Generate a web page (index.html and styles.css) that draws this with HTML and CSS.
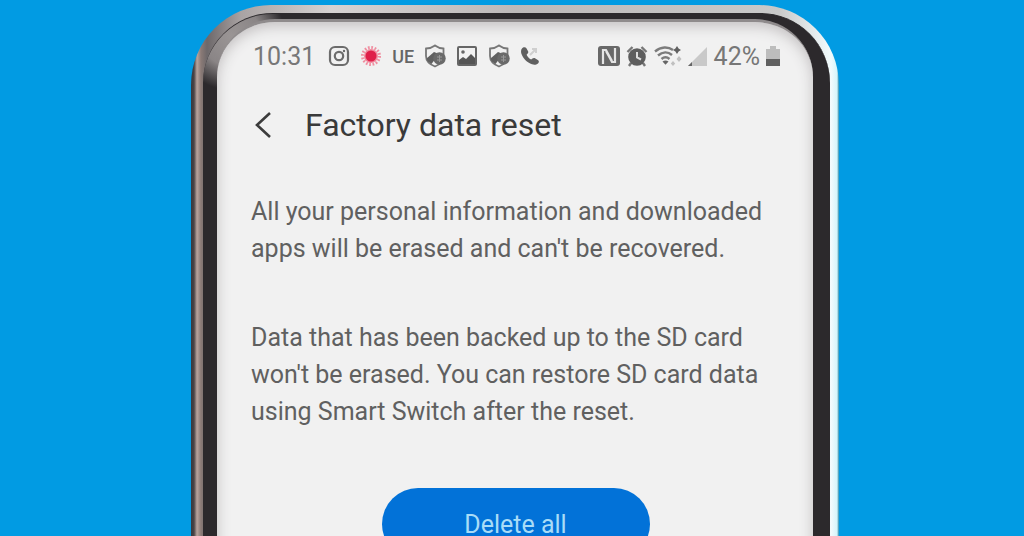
FILE: index.html
```
<!DOCTYPE html>
<html lang="en">
<head>
    <meta charset="UTF-8">
    <meta name="viewport" content="width=device-width, initial-scale=1.0">
    <title>Factory data reset</title>
    <link rel="stylesheet" href="styles.css">
</head>
<body>
    <!-- shield shape used twice in the status bar -->
    <svg class="symbols" aria-hidden="true">
        <symbol id="shield" viewBox="0 0 22 24">
            <path d="M11 1.5C8 3.8 5 4.4 2 4.5V12c0 5 4 8.500 9 10.500 5-2 8.500-5 8.500-10.500V4.500C17 4.400 14 3.800 11 1.500z" fill="none" stroke="#777" stroke-width="1.800"/>
            <path d="M2.500 14.500 10 8l5 2L7.500 20C5 18.500 3 17 2.500 14.500z" fill="#606060"/>
            <circle cx="15.500" cy="14.500" r="6.200" fill="#6a6a6a"/>
            <path d="M13 13h5M13 16h5M15.500 11v7" stroke="#999" stroke-width="1"/>
        </symbol>
    </svg>

    <div class="phone">
        <div class="bezel">
            <main class="screen">
                <div class="status-bar">
                    <span class="clock">10:31</span>
                    <div class="notifications">
                        <svg width="22" height="22" viewBox="0 0 22 22" fill="none" stroke="#6c6c6c" stroke-width="2.200">
                            <rect x="2" y="2" width="18" height="18" rx="5"/>
                            <circle cx="11" cy="11" r="4.200"/>
                            <circle cx="16" cy="6" r="0.600" stroke-width="1.200"/>
                        </svg>
                        <svg width="22" height="22" viewBox="0 0 22 22">
                            <circle cx="11" cy="11" r="8.500" fill="none" stroke="#ef8ea0" stroke-width="3" stroke-dasharray="1.700 1.640"/>
                            <circle cx="11" cy="11" r="7" fill="#f08a9d"/>
                            <circle cx="11" cy="11" r="5.500" fill="#df1f49"/>
                        </svg>
                        <span class="carrier">UE</span>
                        <svg width="22" height="24"><use href="#shield"/></svg>
                        <svg width="22" height="22" viewBox="0 0 22 22">
                            <rect x="2" y="2" width="18" height="18" rx="1" fill="none" stroke="#666" stroke-width="2"/>
                            <circle cx="7" cy="7" r="1.800" fill="#666"/>
                            <path d="M3 15l4-3 3 2 5-5 4 4v6H3z" fill="#555"/>
                        </svg>
                        <svg width="22" height="24"><use href="#shield"/></svg>
                        <svg width="20" height="22" viewBox="0 0 20 22">
                            <path d="M2 3.500C3 2 5.500 1.800 6.400 3.200L8.200 6.600c.5 1.200-.8 2.400-1.600 3.200 1 2.200 2.400 3.800 4.600 4.800.9-.9 2.200-2.100 3.400-1.500l3.600 2.100c1 .8.800 2.300-.2 3.200-1.600 1.400-3.800 1.700-6 .9C7 17.600 3.200 13.500 1.400 8.800.8 6.700.9 4.900 2 3.500z" fill="#606060"/>
                            <path d="M10 10l6-6M12 4h4v4" fill="none" stroke="#cfcfcf" stroke-width="2"/>
                        </svg>
                    </div>
                    <div class="system">
                        <svg width="22" height="22" viewBox="0 0 22 22">
                            <rect x="0" y="1" width="22" height="20" rx="3" fill="#686868"/>
                            <path d="M5 19V5h3l6 11M17 3v14h-3L8 6" fill="none" stroke="#e4e4e4" stroke-width="2.200"/>
                        </svg>
                        <svg width="22" height="22" viewBox="0 0 22 22">
                            <path d="M1.500 7 6.500 2M20.500 7 15.500 2M5 18l-2 3M17 18l2 3" stroke="#777" stroke-width="2.400"/>
                            <circle cx="11" cy="12" r="8.800" fill="#5e5e5e"/>
                            <path d="M11 7v5.500l4 2" fill="none" stroke="#ddd" stroke-width="2"/>
                        </svg>
                        <svg width="28" height="22" viewBox="0 0 28 22">
                            <g fill="none" stroke="#7c7c7c" stroke-width="2.400">
                                <path d="M1 6.500C7 1.500 14 1.500 19 5"/>
                                <path d="M4 10.500c4.500-4 10-4 14-0.500"/>
                                <path d="M7.500 14c2.500-2.200 5.500-2.200 8 0"/>
                            </g>
                            <path d="M8.500 16.500c2-1.400 4-1.400 6 0l-3 3.200z" fill="#666"/>
                            <path d="M23 1l1.600 2.400L27 5l-2.400 1.600L23 9l-1.600-2.400L19 5l2.400-1.600z" fill="#5f5f5f"/>
                            <path d="M25 11l2.500 3-2.500 3-2.500-3zM19 16l2.200 2.500L19 21l-2.200-2.500z" fill="#c0c0c0"/>
                        </svg>
                        <svg width="20" height="22" viewBox="0 0 20 22">
                            <path d="M0 21 19 2v19z" fill="#c9c9c9"/>
                            <path d="M0 21l4-4v4z" fill="#666"/>
                        </svg>
                        <span class="battery-level">42%</span>
                        <svg width="14" height="22" viewBox="0 0 14 22">
                            <path d="M4 1h6v3h4v17H0V4h4z" fill="#bdbdbd"/>
                            <path d="M0 14h14v7H0z" fill="#606060"/>
                        </svg>
                    </div>
                </div>

                <header class="title-bar">
                    <button class="back" type="button" aria-label="Back">
                        <svg width="20" height="28" viewBox="0 0 20 28">
                            <path d="M17 2 4 14l13 12" fill="none" stroke="#3c3c3c" stroke-width="2.600"/>
                        </svg>
                    </button>
                    <h1>Factory data reset</h1>
                </header>

                <p>All your personal information and downloaded<br>apps will be erased and can't be recovered.</p>
                <p>Data that has been backed up to the SD card<br>won't be erased. You can restore SD card data<br>using Smart Switch after the reset.</p>

                <button class="delete" type="button">Delete all</button>
            </main>
        </div>
    </div>
</body>
</html>
```
FILE: styles.css
```
* {
    box-sizing: border-box;
}

body {
    margin: 0;
    padding: 5px 0 0 6px;
    height: 100vh;
    overflow: hidden;
    background-color: #019be3;
    font-family: Roboto, "Liberation Sans", sans-serif;
}

.symbols {
    display: none;
}

/* metal frame */
.phone {
    max-width: 648px;
    margin: 0 auto;
    padding: 8px 9px 0 12px;
    border-radius: 80px 80px 0 0;
    background: linear-gradient(to right, #35393f 0, #4a4446 3px, #b9a49d 6px, #8a7a76 10px, #6d686a 16px, #a9a3a3 50px, #d6d2d2 140px, #bdb9b9 50%, #c9c9c9 calc(100% - 60px), #f2fbfd calc(100% - 8px), #d5f5fb calc(100% - 2px), #2c8ba8 100%);
}

/* light catches the top left corner of the glass */
.bezel {
    padding: 5px 17px 0 14px;
    border-radius: 70px 70px 0 0;
    background: radial-gradient(circle at 28px 22px, #9a9595 0, #8a8586 30px, #2c292c 54px);
    border-top: 1px solid #2c292c;
}

.screen {
    display: flex;
    flex-direction: column;
    min-height: 100vh;
    padding: 20px 33px 40px 34px;
    border-top: 3px solid #8f8b8c;
    border-radius: 58px 58px 0 0;
    background-color: #f1f1f1;
    box-shadow: inset 0 4px 14px #c2bfc0;
}

/* status bar */
.status-bar {
    display: flex;
    align-items: center;
    height: 28px;
    padding-left: 2px;
    color: #777;
}

.clock,
.battery-level {
    font-size: 25px;
}

.notifications {
    display: flex;
    align-items: center;
    gap: 10px;
    margin-left: 13px;
}

.carrier {
    width: 22px;
    color: #666;
    font-size: 18px;
    font-weight: 500;
}

.system {
    display: flex;
    align-items: center;
    gap: 6px;
    margin-left: auto;
}

/* title */
.title-bar {
    display: flex;
    align-items: center;
    gap: 32px;
    height: 40px;
    margin-top: 35px;
    padding-left: 2px;
}

.back {
    display: flex;
    padding: 0;
    border: none;
    background: none;
    cursor: pointer;
}

h1 {
    margin: 0;
    color: #3a3a3a;
    font-size: 32px;
    font-weight: 400;
}

p {
    margin: 48px 0 0;
    color: #606060;
    font-size: 25px;
    line-height: 37px;
    white-space: nowrap;
}

p + p {
    margin-top: 52px;
}

.delete {
    flex-shrink: 0;
    align-self: center;
    width: 268px;
    height: 72px;
    margin-top: 58px;
    border: none;
    border-radius: 36px;
    background-color: #0272d8;
    color: #a9dcf7;
    font-family: inherit;
    font-size: 25px;
    cursor: pointer;
}
```
